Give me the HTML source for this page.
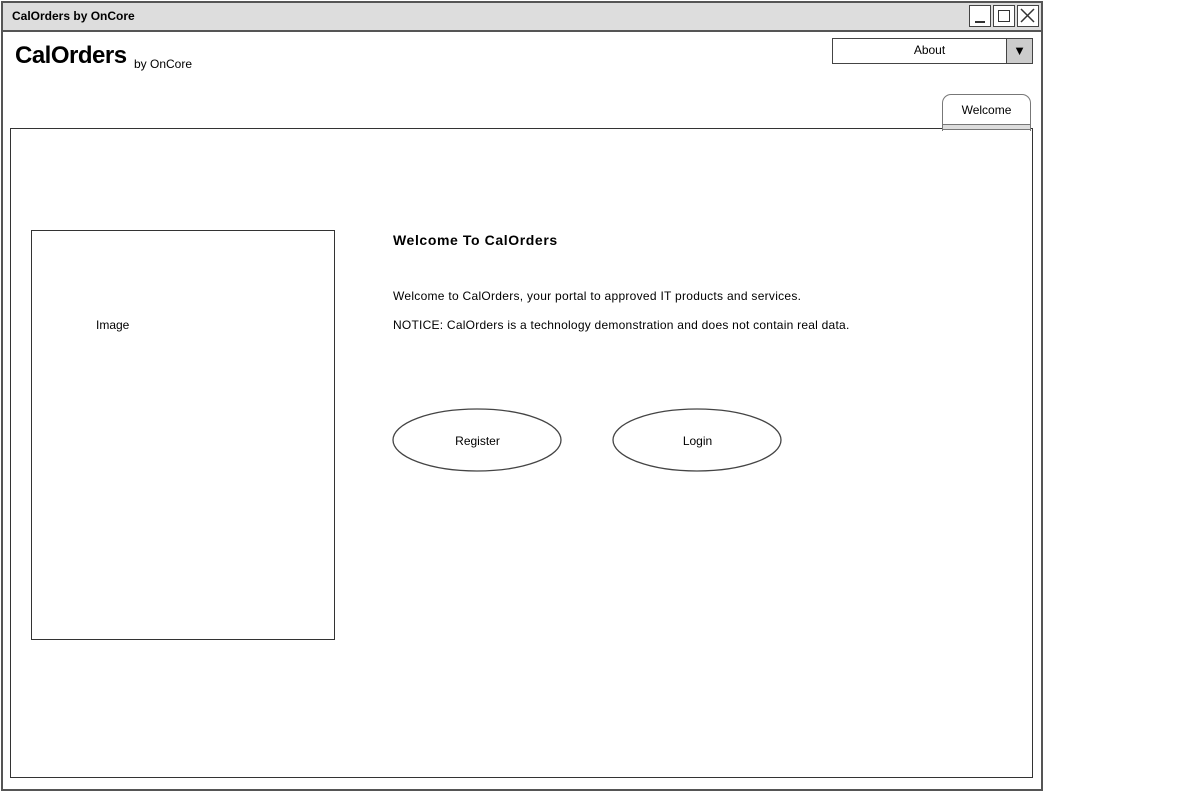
<!DOCTYPE html>
<html><head><style>
body{margin:0;width:1200px;height:800px;background:#fff;position:relative;font-family:"Liberation Sans",sans-serif;color:#000;overflow:hidden}
.a{position:absolute;box-sizing:border-box}
</style></head><body>
<div class="a" style="left:1px;top:1px;width:1042px;height:790px;border:2px solid #555;"></div>
<div class="a" style="left:3px;top:3px;width:1038px;height:29px;background:#ddd;border-bottom:2px solid #555;"></div>
<div class="a" style="left:12px;top:9px;font-size:12px;font-weight:bold;">CalOrders by OnCore</div>
<div class="a" style="left:969px;top:5px;width:22px;height:22px;border:1.5px solid #444;background:#fff"><div class="a" style="left:5px;top:15px;width:10px;height:1.5px;background:#333"></div></div>
<div class="a" style="left:993px;top:5px;width:22px;height:22px;border:1.5px solid #444;background:#fff"><div class="a" style="left:4px;top:4px;width:12px;height:12px;border:1.5px solid #333"></div></div>
<div class="a" style="left:1017px;top:5px;width:22px;height:22px;border:1.5px solid #444;background:#fff"><svg width="19" height="19" style="position:absolute;left:0;top:0"><path d="M3 3L16 16M16 3L3 16" stroke="#333" stroke-width="1.5"/></svg></div>
<div class="a" style="left:15px;top:42px;font-size:24px;font-weight:bold;letter-spacing:-0.5px">CalOrders</div>
<div class="a" style="left:134px;top:57px;font-size:12px;">by OnCore</div>
<div class="a" style="left:832px;top:38px;width:201px;height:26px;border:1.5px solid #444;background:#fff"></div>
<div class="a" style="left:1006px;top:38px;width:27px;height:26px;border:1.5px solid #444;background:#ccc;font-size:13px;text-align:center;line-height:24px">▼</div>
<div class="a" style="left:832px;top:43px;width:195px;text-align:center;font-size:12px;">About</div>
<div class="a" style="left:10px;top:128px;width:1023px;height:650px;border:1.5px solid #333;"></div>
<div class="a" style="left:942px;top:94px;width:89px;height:37px;border:1.5px solid #777;border-bottom:none;border-radius:9px 9px 0 0;background:#fff"></div>
<div class="a" style="left:943px;top:124px;width:87px;height:6px;background:#ddd;border-top:1px solid #777;border-bottom:1px solid #777"></div>
<div class="a" style="left:942px;top:103px;width:89px;text-align:center;font-size:12px;">Welcome</div>
<div class="a" style="left:31px;top:230px;width:304px;height:410px;border:1.5px solid #333;"></div>
<div class="a" style="left:96px;top:318px;font-size:12px;">Image</div>
<div class="a" style="left:393px;top:232px;font-size:14px;font-weight:bold;letter-spacing:0.6px">Welcome To CalOrders</div>
<div class="a" style="left:393px;top:289px;font-size:12px;letter-spacing:0.28px">Welcome to CalOrders, your portal to approved IT products and services.</div>
<div class="a" style="left:393px;top:318px;font-size:12px;letter-spacing:0.24px">NOTICE: CalOrders is a technology demonstration and does not contain real data.</div>
<svg class="a" style="left:390px;top:405px" width="400" height="70"><ellipse cx="87" cy="35" rx="84" ry="31" fill="#fff" stroke="#444" stroke-width="1.3"/><ellipse cx="307" cy="35" rx="84" ry="31" fill="#fff" stroke="#444" stroke-width="1.3"/></svg>
<div class="a" style="left:393px;top:434px;width:169px;text-align:center;font-size:12px;">Register</div>
<div class="a" style="left:613px;top:434px;width:169px;text-align:center;font-size:12px;">Login</div>
</body></html>
